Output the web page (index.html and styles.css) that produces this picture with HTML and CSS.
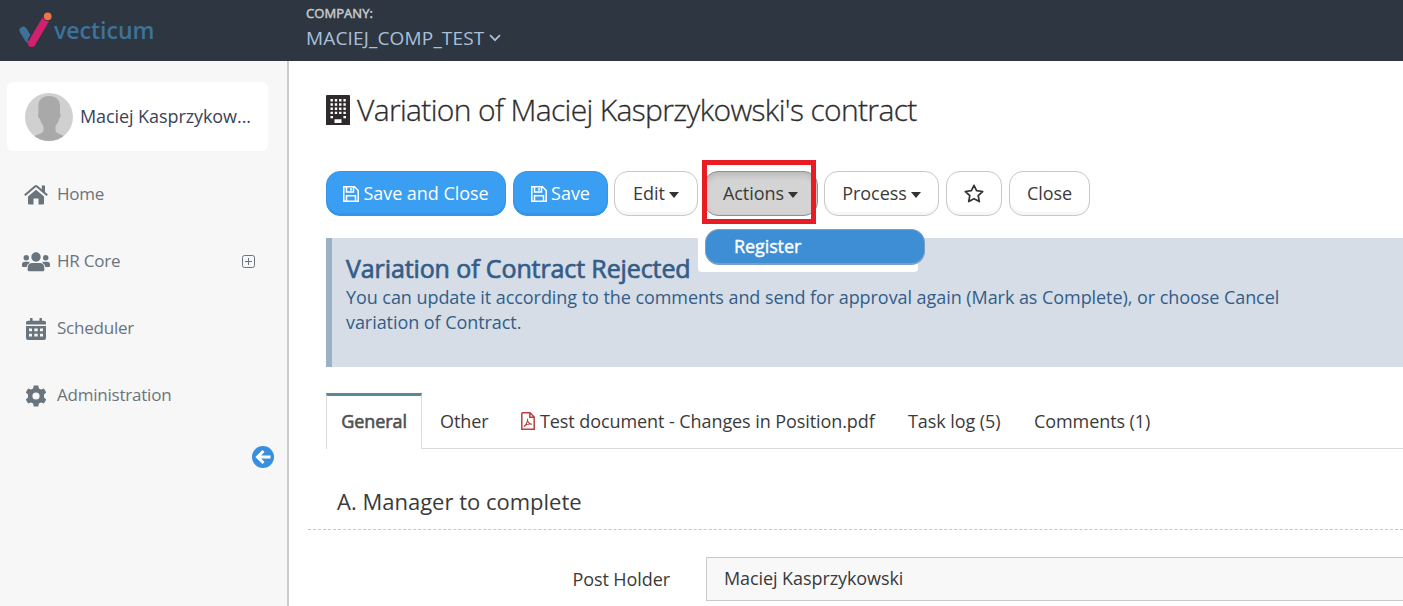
FILE: index.html
```
<!DOCTYPE html>
<html lang="en">
<head>
<meta charset="utf-8">
<title>Variation of contract</title>
<link rel="stylesheet" href="styles.css">
</head>
<body>
<header class="topbar">
  <div class="brand">
    <svg class="brand-mark" width="34" height="37" viewBox="0 0 34 37"><path d="M5.300 18.500L10.500 27" stroke="#3c7199" stroke-width="7.500" stroke-linecap="round"/><path d="M13.500 31L28 6" stroke="#2d3641" stroke-width="10"/><path d="M13.700 31.200L27.700 7.500" stroke="#d0206f" stroke-width="7.600"/><circle cx="13.700" cy="31.200" r="3.800" fill="#d0206f"/><circle cx="29.700" cy="4.200" r="5" fill="#2d3641"/><circle cx="29.700" cy="4.300" r="3.900" fill="#ee7448"/></svg>
    <span class="brand-name">vecticum</span>
  </div>
  <div class="company">
    <div class="company-label">COMPANY:</div>
    <div class="company-name"><span class="company-text">MACIEJ_COMP_TEST</span><svg width="12" height="8" viewBox="0 0 12 8" fill="none" stroke="#a9c0dc" stroke-width="1.7"><path d="M1 1.2L6 6.2L11 1.2"/></svg></div>
  </div>
</header>
<div class="shell">
  <aside class="sidebar">
    <div class="user">
      <svg width="48" height="48" viewBox="0 0 48 48"><defs><clipPath id="face"><circle cx="24" cy="24" r="24"/></clipPath></defs><g clip-path="url(#face)"><path d="M0 0H48V48H0Z" fill="#d0d0d0"/><path d="M24 3C17 3 13 7 13.4 14V20C12.5 21 13 25 15 26C16 30 17.5 32 18.5 33V38C17 41 10 42 6 45V48H43V45C38 42 32 41 30.500 38V33C32 31 33.500 29 34 26C36 24 36 21 35 20V13C35 7 31 3 24 3Z" fill="#a9a9a9"/></g></svg>
      <span class="user-name">Maciej Kasprzykow...</span>
    </div>
    <nav class="menu">
      <a class="menu-item"><span class="menu-icon"><svg width="24" height="20" viewBox="0 0 24 20" fill="#6a747c"><path d="M12 4.800L20 11.500V18.500Q20 19.500 19 19.500H14.500V13.500H9.500V19.500H5Q4 19.500 4 18.500V11.500Z"/><path d="M.8 10.300L11 1.500Q12 .8 13 1.500L23.200 10.300" fill="none" stroke="#6a747c" stroke-width="2.100"/><path d="M17.800 .5H21V8L17.800 5.200Z"/></svg></span><span class="menu-text t-home">Home</span></a>
      <a class="menu-item"><span class="menu-icon"><svg width="28" height="20" viewBox="0 0 28 20" fill="#6a747c"><circle cx="14" cy="5" r="4.700"/><circle cx="4.300" cy="5.800" r="2.700"/><circle cx="23.700" cy="5.800" r="2.700"/><path d="M5.700 19V16Q5.700 11 10.500 11H17.500Q22.300 11 22.300 16V18Q22.300 19.300 21 19.300H7Q5.700 19.300 5.700 18Z"/><path d="M0 14V12.500Q0 9.700 3 9.700H5.500Q7 9.700 8 10.500Q5 12 4.600 15H1Q0 15 0 14ZM28 14V12.500Q28 9.700 25 9.700H22.500Q21 9.700 20 10.500Q23 12 23.400 15H27Q28 15 28 14Z"/></svg></span><span class="menu-text t-hr">HR Core</span><svg class="expand" width="13" height="13" viewBox="0 0 13 13" fill="none" stroke="#6a747c"><rect x=".5" y=".5" width="12" height="12" rx="2"/><path d="M6.500 3V10M3 6.500H10"/></svg></a>
      <a class="menu-item"><span class="menu-icon"><svg width="20" height="22" viewBox="0 0 20 22" fill="#6a747c"><path fill-rule="evenodd" d="M0 4.500Q0 2.700 2 2.700H4V.5Q4 0 4.600 0H6Q6.600 0 6.600 .6V2.700H13.400V.6Q13.400 0 14 0H15.400Q16 0 16 .6V2.700H18Q20 2.700 20 4.500V6.500H0ZM0 8H20V20Q20 22 18 22H2Q0 22 0 20ZM3 10.500V13.300H6V10.500ZM8.300 10.500V13.300H11.700V10.500ZM14 10.500V13.300H17V10.500ZM3 15.800V18.500H6V15.800ZM8.300 15.800V18.500H11.700V15.800ZM14 15.800V18.500H17V15.800Z"/></svg></span><span class="menu-text t-sch">Scheduler</span></a>
      <a class="menu-item"><span class="menu-icon"><svg width="22" height="22" viewBox="0 0 22 22" fill="#6a747c"><path fill-rule="evenodd" d="M8.700 .5H13.300L13.900 3.400L16 4.600L18.900 3.600L21.200 7.500L19 9.500V12.500L21.200 14.500L18.900 18.400L16 17.400L13.900 18.600L13.300 21.500H8.700L8.100 18.600L6 17.400L3.100 18.400L.8 14.500L3 12.500V9.500L.8 7.500L3.100 3.600L6 4.600L8.100 3.400ZM11 7.400A3.600 3.600 0 1 0 11 14.600A3.600 3.600 0 1 0 11 7.400Z"/></svg></span><span class="menu-text t-adm">Administration</span></a>
    </nav>
    <svg class="collapse" width="22" height="22" viewBox="0 0 22 22"><circle cx="11" cy="11" r="11" fill="#388fe0"/><path d="M11.500 5L5.500 11L11.500 17M5.800 11H18.500" fill="none" stroke="#fff" stroke-width="3"/></svg>
  </aside>
  <main class="content">
    <h1 class="title"><svg width="24" height="30" viewBox="0 0 24 30"><path d="M1 0H23Q24 0 24 1V30H0V1Q0 0 1 0Z" fill="#2f2b2d"/><g stroke="#fff" stroke-width="2.400" stroke-dasharray="2.400 1.900"><path d="M4.500 5.300H20M4.500 9.500H20M4.500 13.700H20M4.500 17.900H20"/></g><path d="M4.500 21H7V23.300H4.500ZM17.400 21H20V23.300H17.400ZM8.500 24.300H15.500V28H8.500Z" fill="#fff"/></svg><span class="title-text">Variation of Maciej Kasprzykowski's contract</span></h1>
    <div class="toolbar">
      <button class="btn primary b-saveclose"><svg width="16" height="16" viewBox="0 0 16 16" fill="none" stroke="#fff" stroke-width="1.500"><path d="M.8 .8H11.500L15.200 4.500V15.200H.8ZM3.500 .8V6H10.500V.8M3.500 15V9.800H12.500V15M8 2V4.800"/></svg><span>Save and Close</span></button>
      <button class="btn primary b-save"><svg width="16" height="16" viewBox="0 0 16 16" fill="none" stroke="#fff" stroke-width="1.500"><path d="M.8 .8H11.500L15.200 4.500V15.200H.8ZM3.500 .8V6H10.500V.8M3.500 15V9.800H12.500V15M8 2V4.800"/></svg><span>Save</span></button>
      <button class="btn b-edit"><span>Edit</span><i class="caret"></i></button>
      <div class="dropdown">
        <button class="btn active b-actions"><span>Actions</span><i class="caret"></i></button>
        <div class="marker"></div>
        <div class="dropdown-menu"><a class="dropdown-item">Register</a></div>
      </div>
      <button class="btn b-process"><span>Process</span><i class="caret"></i></button>
      <button class="btn b-star"><svg width="20" height="19" viewBox="0 0 20 19" fill="none" stroke="#333" stroke-width="1.700" stroke-linejoin="round"><path d="M10 1.300L12.600 6.700L18.700 7.500L14.200 11.600L15.300 17.600L10 14.700L4.700 17.600L5.800 11.600L1.300 7.500L7.400 6.700Z"/></svg></button>
      <button class="btn b-close"><span>Close</span></button>
    </div>
    <section class="notice">
      <h2 class="notice-title">Variation of Contract Rejected</h2>
      <p class="notice-text">You can update it according to the comments and send for approval again (Mark as Complete), or choose Cancel<br>variation of Contract.</p>
    </section>
    <div class="tabs">
      <a class="tab selected"><span>General</span></a>
      <a class="tab t-other"><span>Other</span></a>
      <a class="tab t-doc"><svg width="14" height="18" viewBox="0 0 14 18" fill="none" stroke="#b9403d" stroke-width="1.500"><path d="M1 .8H9L13.200 5V17.200H.8V.8M8.800 .8V5.200H13.200"/><path stroke-width="1.100" d="M3 14.500C5 13 7 9 6.500 7C6 9 8 12 11 12.300C8.500 11.700 5.500 12.200 3 14.500"/></svg><span>Test document - Changes in Position.pdf</span></a>
      <a class="tab t-log"><span>Task log (5)</span></a>
      <a class="tab t-comments"><span>Comments (1)</span></a>
    </div>
    <h3 class="section-title"><span>A. Manager to complete</span></h3>
    <div class="field">
      <label class="field-label">Post Holder</label>
      <div class="field-value">Maciej Kasprzykowski</div>
    </div>
  </main>
</div>
</body>
</html>
```
FILE: styles.css
```
* { box-sizing: border-box; }
body { margin: 0; width: 1403px; height: 606px; overflow: hidden; font-family: "Open Sans", sans-serif; font-size: 18px; color: #3a3a3a; background: #fff; }
svg { display: block; flex: none; }
h1, h2, h3, p { margin: 0; font-weight: 400; }
span, label, .dropdown-item { white-space: nowrap; }

.topbar { display: flex; height: 61px; background: #2d3641; }
.brand { display: flex; width: 306px; padding: 12px 0 0 18px; }
.brand-name { margin-left: 2px; margin-top: 1px; font-size: 23px; line-height: 35px; font-weight: 600; color: #3d7299; }
.company-label { padding-top: 4px; font-size: 13px; line-height: 18px; letter-spacing: .06px; color: #c8c8c8; -webkit-text-stroke: .5px #c8c8c8; }
.company-name { display: flex; align-items: center; gap: 5px; margin-top: 3px; font-size: 19px; letter-spacing: .16px; line-height: 26px; color: #a9c0dc; }

.shell { display: flex; height: 545px; }
.sidebar { display: flex; flex-direction: column; width: 289px; padding: 21px 0 0 7px; background: #f7f7f7; border-right: 2px solid #cbcbcb; }
.user { display: flex; align-items: center; width: 261px; height: 69px; padding-left: 18px; gap: 7px; background: #fff; border-radius: 6px; color: #3b4358; }
.user-name { padding-bottom: 2px; letter-spacing: -.08px; }
.menu { padding-top: 10px; }
.menu-item { display: flex; align-items: center; height: 67px; color: #6a747c; font-size: 17px; }
.menu-icon { display: flex; justify-content: center; width: 28px; margin-left: 15px; }
.menu-text { margin-left: 7px; padding-bottom: 2px; letter-spacing: -.22px; }
.expand { margin: 0 32px 0 auto; }
.collapse { margin: 17px 0 0 245px; }

.content { flex: 1; min-width: 0; padding-left: 37px; }
.title { display: flex; align-items: center; height: 100px; gap: 7px; color: #2d2d2d; font-size: 30px; font-weight: 300; letter-spacing: -.65px; -webkit-text-stroke: .3px #2d2d2d; }
.title > svg { margin-top: -2px; }
.title-text { padding-bottom: 3px; }
.toolbar { display: flex; margin-top: 10px; height: 45px; }
.btn { display: flex; align-items: center; justify-content: center; height: 45px; padding: 0; border: 1px solid #c8c8c8; border-radius: 14px; background: #fff; box-shadow: inset 0 -3px 0 #f6f6f6; font: 18px "Open Sans", sans-serif; color: #3a3a3a; gap: 4px; }
.btn > span { padding-bottom: 2px; letter-spacing: -.05px; }
.primary { background: #3a9ef3; border-color: #3595e8; box-shadow: inset 0 -2px 0 #3594e6; color: #fff; }
.active { background: #d4d4d4; border-color: #919191; box-shadow: inset 0 3px 6px rgba(0,0,0,.14); }
.active > span { margin-left: -1px; }
.caret { border: 5.5px solid transparent; border-top: 6px solid #333; border-bottom: 0; margin-top: 2px; }
.b-saveclose { width: 180px; margin-right: 7px; }
.b-save { width: 95px; margin-right: 6px; }
.b-edit { width: 84px; margin-right: 6px; }
.b-actions { width: 114px; }
.b-process { width: 115px; margin-left: 6px; margin-right: 7px; }
.b-star { width: 56px; margin-right: 7px; }
.b-close { width: 81px; }
.dropdown { position: relative; }
.marker { position: absolute; left: -2px; top: -11px; width: 114px; height: 64px; border: 5px solid #e81c24; }
.dropdown-menu { position: absolute; left: -6px; top: 56px; width: 220px; height: 45px; padding: 2px 0 0 7px; border-radius: 0 0 4px 4px; background: #fff; }
.dropdown-item { display: block; width: 220px; height: 36px; padding-left: 28px; border: 1px solid #7a9fc1; border-bottom-width: 2px; border-radius: 14px; background: #3d8ed4; color: #fff; line-height: 33px; letter-spacing: -.1px; -webkit-text-stroke: .4px #fff; }

.notice { height: 129px; margin-top: 22px; padding: 14px 0 0 14px; border-left: 6px solid #9ab2c7; background: #d6dde6; color: #335d88; }
.notice-title { height: 33px; font-size: 25px; line-height: 32px; letter-spacing: -.11px; -webkit-text-stroke: .7px #335d88; }
.notice-text { line-height: 25px; white-space: nowrap; letter-spacing: -.06px; }

.tabs { display: flex; height: 56px; margin-top: 26px; border-bottom: 1px solid #dadada; letter-spacing: -.08px; }
.tab { display: flex; align-items: center; height: 56px; gap: 5px; }
.selected { justify-content: center; width: 96px; padding-bottom: 3px; border: 1px solid #dadada; border-top: 3px solid #5b8799; border-bottom: 0; background: #fff; color: #505050; -webkit-text-stroke: .6px #505050; }
.t-other { margin-left: 18px; width: 81px; }
.t-doc { width: 387px; }
.t-log { width: 126px; }
.section-title { height: 81px; margin-left: -18px; padding: 37px 0 0 29px; border-bottom: 1px dashed #c7c7c7; font-size: 22px; line-height: 30px; }
.field { display: flex; padding-top: 27px; line-height: 40px; letter-spacing: -.08px; }
.field-label { width: 344px; text-align: right; padding-top: 2px; }
.field-value { flex: 1; height: 44px; margin-left: 36px; padding-left: 17px; border: 1px solid #c9c9c9; border-right: 0; background: #f8f8f8; }
```
